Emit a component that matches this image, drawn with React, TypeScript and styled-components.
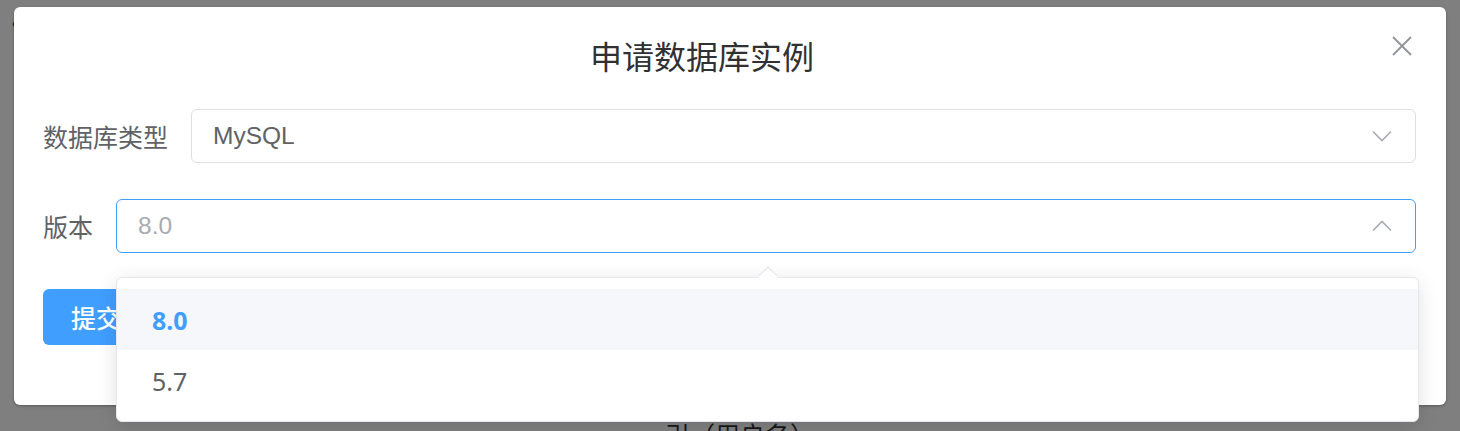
import React from 'react';
import styled, { createGlobalStyle } from 'styled-components';

const GlobalStyle = createGlobalStyle`
  html, body { margin: 0; padding: 0; background: #ffffff; }
  body {
    font-family: "Noto Sans CJK SC", "Noto Sans", sans-serif;
    overflow: hidden;
  }
  #root { height: 431px; }
`;

const Page = styled.div`
  position: relative;
  height: 431px;
  overflow: hidden;
  color: #303133;
  padding-top: 14px;
  box-sizing: border-box;
`;

const CornerGlyph = styled.div`
  padding-left: 2px;
  font-size: 20px;
  line-height: 20px;
  height: 20px;
`;

const BehindLine = styled.div`
  margin-top: 388px;
  padding-left: 665px;
  font-size: 25px;
  line-height: 25px;
  white-space: nowrap;
`;

const Overlay = styled.div`
  position: absolute;
  inset: 0;
  background: rgba(0, 0, 0, 0.5);
  display: flex;
  justify-content: center;
  align-items: flex-start;
  padding-top: 7px;
  box-sizing: border-box;
`;

const Dialog = styled.div`
  position: relative;
  width: 1432px;
  background: #ffffff;
  border-radius: 6px;
  box-shadow: 0 1px 3px rgba(0, 0, 0, 0.3);
`;

const Header = styled.div`
  padding: 28px 56px 0 0;
  text-align: center;
`;

const Title = styled.div`
  font-size: 32px;
  line-height: 40px;
  color: #303133;
`;

const CloseButton = styled.button`
  position: absolute;
  top: 29px;
  right: 34px;
  width: 20px;
  height: 20px;
  padding: 0;
  border: none;
  background: transparent;
  display: flex;
  align-items: center;
  justify-content: center;
  cursor: pointer;
`;

const Body = styled.div`
  padding: 34px 30px 60px 29px;
`;

const FormRow = styled.div`
  display: flex;
  align-items: center;
  margin-bottom: 36px;
`;

const Label = styled.label`
  font-size: 25px;
  line-height: 54px;
  color: #606266;
  padding-right: 23px;
  white-space: nowrap;
`;

const Select = styled.div<{ $focused?: boolean }>`
  position: relative;
  flex: 1;
  height: 54px;
  box-sizing: border-box;
  border: 1px solid ${(p) => (p.$focused ? '#409eff' : '#dcdfe6')};
  border-radius: 6px;
  display: flex;
  align-items: center;
  padding: 0 23px 0 21px;
  background: #ffffff;
`;

const SelectValue = styled.span<{ $placeholder?: boolean }>`
  flex: 1;
  font-family: "Liberation Sans", Arial, sans-serif;
  font-size: 24.5px;
  color: ${(p) => (p.$placeholder ? '#a8abb2' : '#606266')};
`;

const Dropdown = styled.div`
  position: absolute;
  top: calc(100% + 25px);
  left: -1px;
  right: -4px;
  z-index: 10;
  background: #ffffff;
  border: 1px solid #e4e7ed;
  border-radius: 6px;
  box-shadow: 0 4px 20px rgba(0, 0, 0, 0.12);
  padding: 11px 0 10px;

  &::before,
  &::after {
    content: '';
    position: absolute;
    left: 50%;
    transform: translateX(-50%);
    width: 0;
    height: 0;
    border-left: 12px solid transparent;
    border-right: 12px solid transparent;
  }
  &::before {
    top: -12px;
    border-bottom: 12px solid #e4e7ed;
  }
  &::after {
    top: -10px;
    border-bottom: 11px solid #ffffff;
  }
`;

const Option = styled.div<{ $selected?: boolean }>`
  height: 61px;
  display: flex;
  align-items: center;
  padding-left: 35px;
  font-family: "Noto Sans", "Liberation Sans", sans-serif;
  font-size: 25px;
  color: ${(p) => (p.$selected ? '#409eff' : '#606266')};
  font-weight: ${(p) => (p.$selected ? 700 : 400)};
  background: ${(p) => (p.$selected ? '#f5f7fa' : '#ffffff')};
`;

const SubmitButton = styled.button`
  height: 56px;
  padding: 0 28px;
  border: none;
  border-radius: 6px;
  background: #409eff;
  color: #ffffff;
  font-family: "Noto Sans CJK SC", sans-serif;
  font-size: 25px;
  font-weight: 500;
`;

const Chevron: React.FC<{ up?: boolean }> = ({ up }) => (
  <svg width="20" height="12" viewBox="0 0 20 12" fill="none">
    <polyline
      points={up ? '1,10.5 10,1.5 19,10.5' : '1,1.5 10,10.5 19,1.5'}
      stroke="#a8abb2"
      strokeWidth="1.6"
      fill="none"
    />
  </svg>
);

export default function App() {
  return (
    <>
      <GlobalStyle />
      <Page>
        <CornerGlyph>《</CornerGlyph>
        <BehindLine>引（用户名）</BehindLine>
        <Overlay>
          <Dialog>
            <Header>
              <Title>申请数据库实例</Title>
            </Header>
            <CloseButton aria-label="close">
              <svg width="20" height="20" viewBox="0 0 20 20">
                <path d="M1 1 L19 19 M19 1 L1 19" stroke="#909399" strokeWidth="1.8" />
              </svg>
            </CloseButton>
            <Body>
              <FormRow>
                <Label>数据库类型</Label>
                <Select>
                  <SelectValue>MySQL</SelectValue>
                  <Chevron />
                </Select>
              </FormRow>
              <FormRow>
                <Label>版本</Label>
                <Select $focused>
                  <SelectValue $placeholder>8.0</SelectValue>
                  <Chevron up />
                  <Dropdown>
                    <Option $selected>8.0</Option>
                    <Option>5.7</Option>
                  </Dropdown>
                </Select>
              </FormRow>
              <SubmitButton>提交</SubmitButton>
            </Body>
          </Dialog>
        </Overlay>
      </Page>
    </>
  );
}
